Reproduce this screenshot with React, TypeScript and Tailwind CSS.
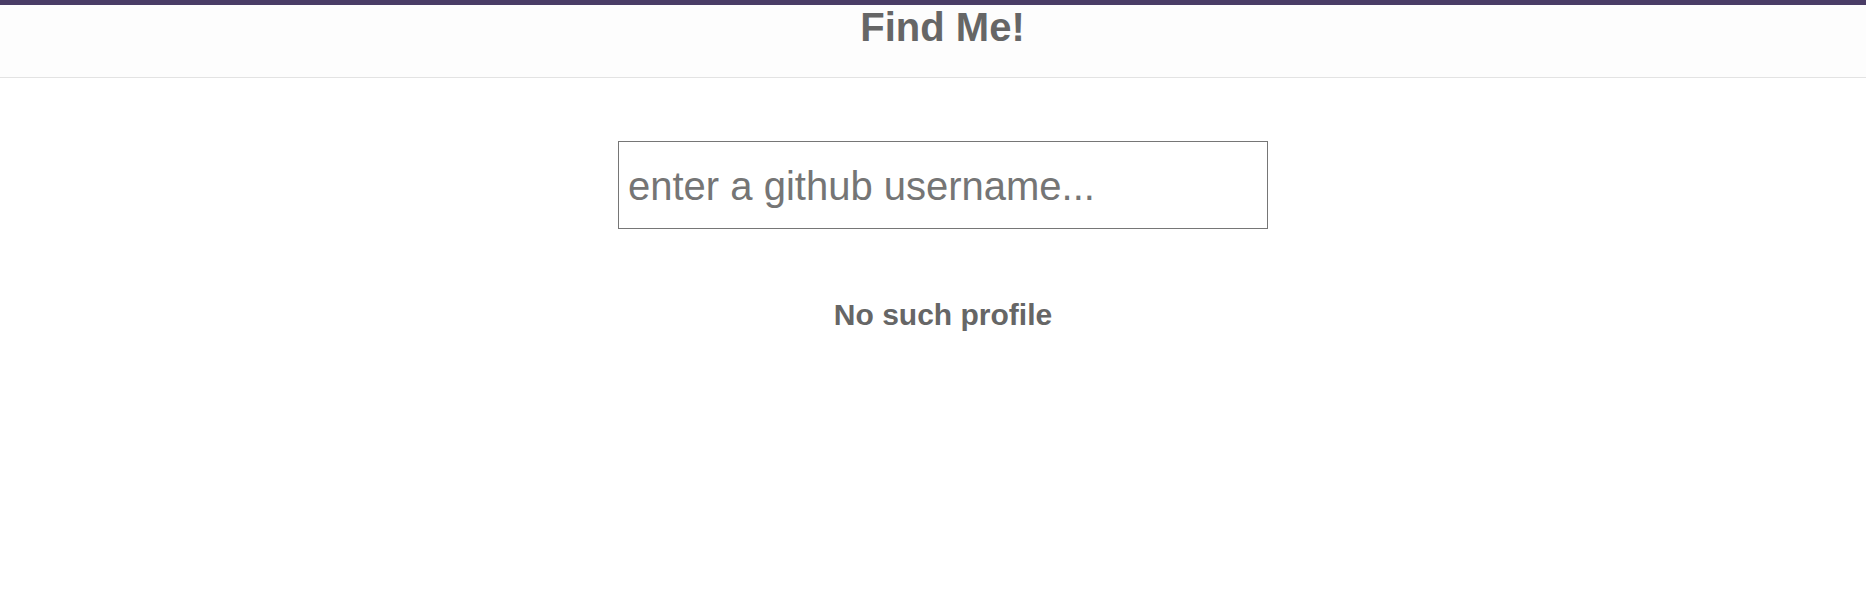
export default function App() {
  return (
    <div className="min-h-screen bg-white font-['Liberation_Sans',Arial,sans-serif]">
      <div className="h-[5px] bg-[#4a3d66]" />
      <header className="h-[73px] bg-[#fdfdfd] border-b border-[#e3e3e3] pl-[19px]">
        <h1 className="text-center text-[40px] leading-[45px] font-bold text-[#666666]">Find Me!</h1>
      </header>
      <main className="flex flex-col items-center pl-[20px]">
        <input
          type="text"
          placeholder="enter a github username..."
          className="mt-[63px] w-[650px] h-[88px] border border-[#767676] pl-[9px] pr-[3px] pt-[2px] text-[40px] text-[#666666] placeholder:text-[#757575] outline-none"
        />
        <h3 className="mt-[69px] text-[30px] leading-[34px] font-bold text-[#666666]">No such profile</h3>
      </main>
    </div>
  );
}
